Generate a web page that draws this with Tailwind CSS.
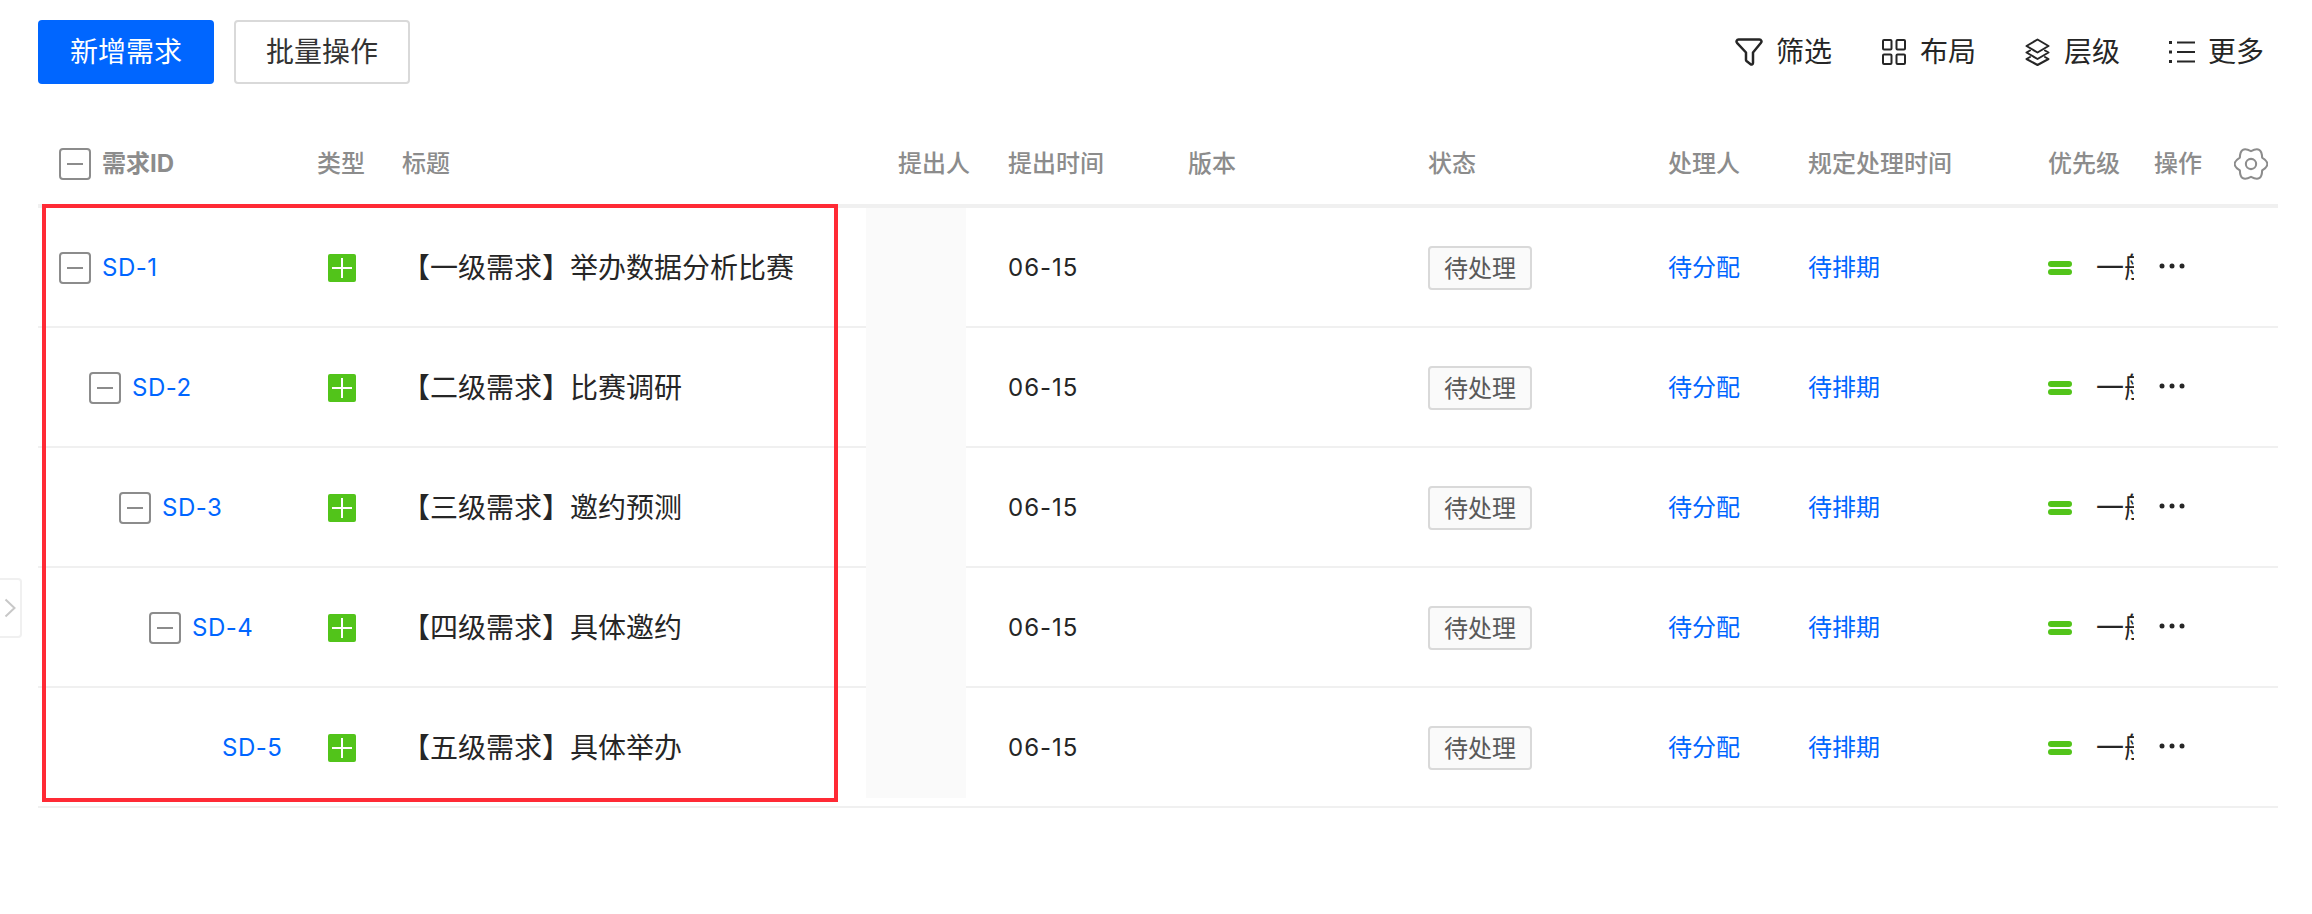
<!DOCTYPE html>
<html lang="zh-CN">
<head>
  <meta charset="UTF-8">
  <title>需求列表</title>
  <script src="https://cdn.jsdelivr.net/npm/@tailwindcss/browser@4"></script>
</head>
<body class="bg-white text-[#262626] font-['Inter','Noto_Sans_CJK_SC',sans-serif] overflow-hidden">

  <div class="relative w-[2312px] h-[914px] pl-[38px] pr-[34px] pt-[20px]">

    <!-- Toolbar -->
    <div class="flex items-center justify-between h-[64px] text-[28px] leading-none">
      <div class="flex gap-[20px]">
        <button class="w-[176px] h-[64px] rounded-[4px] bg-[#0066ff] text-white">新增需求</button>
        <button class="w-[176px] h-[64px] rounded-[4px] border-2 border-[#d9d9d9] text-[#333]">批量操作</button>
      </div>
      <div class="flex items-center gap-[49px] pr-[14px]">
        <div class="flex items-center gap-[13px] mr-[1px]">
          <svg class="w-[28px] h-[28px]" viewBox="0 0 28 28" fill="none" stroke="#262626" stroke-width="2.500" stroke-linejoin="round"><path d="M3.500 1.500H24.500a2 2 0 0 1 1.500 3.300L18 14.500V25a1.500 1.500 0 0 1-2.400 1.200L11.500 23a1.500 1.500 0 0 1-.5-1.100V14.500L2 4.800A2 2 0 0 1 3.500 1.500Z"/></svg>
          <span>筛选</span>
        </div>
        <div class="flex items-center gap-[14px]">
          <svg class="w-[24px] h-[26px]" viewBox="0 0 24 26" fill="none" stroke="#262626" stroke-width="2"><rect x="1" y="1" width="8.500" height="9.500" rx="1"/><rect x="14.500" y="1" width="8.500" height="9.500" rx="1"/><rect x="1" y="15.500" width="8.500" height="9.500" rx="1"/><rect x="14.500" y="15.500" width="8.500" height="9.500" rx="1"/></svg>
          <span>布局</span>
        </div>
        <div class="flex items-center gap-[14px]">
          <svg class="w-[25px] h-[28px]" viewBox="0 0 25 28" fill="none" stroke="#262626" stroke-width="2" stroke-linejoin="round" stroke-linecap="round"><path d="M12.500 1.500L23.500 8 12.500 14.500 1.500 8Z"/><path d="M5 12.500L1.500 14.500 12.500 21 23.500 14.500 20 12.500"/><path d="M5 19L1.500 21 12.500 27 23.500 21 20 19"/></svg>
          <span>层级</span>
        </div>
        <div class="flex items-center gap-[13px]">
          <svg class="w-[26px] h-[24px]" viewBox="0 0 26 24" fill="#262626"><rect x="0" y="1" width="3" height="3"/><rect x="0" y="10.500" width="3" height="3"/><rect x="0" y="20" width="3" height="3"/><rect x="8" y="1.500" width="18" height="2"/><rect x="8" y="11" width="18" height="2"/><rect x="8" y="20.500" width="18" height="2"/></svg>
          <span>更多</span>
        </div>
      </div>
    </div>

    <!-- Table header -->
    <div class="mt-[38px] h-[86px] pt-[2px] border-b-4 border-[#f0f0f0] grid grid-cols-[279px_85px_496px_110px_180px_240px_240px_140px_240px_106px_124px] items-center text-[24px] font-medium text-[#8c8c8c]">
      <div class="flex items-center pl-[21px] gap-[11px]">
        <span class="w-[32px] h-[32px] rounded-[4px] border-2 border-[#8c8c8c] flex items-center justify-center"><span class="w-[16px] h-[2px] bg-[#8c8c8c]"></span></span>
        <span class="font-bold">需求ID</span>
      </div>
      <div>类型</div>
      <div>标题</div>
      <div>提出人</div>
      <div>提出时间</div>
      <div>版本</div>
      <div>状态</div>
      <div>处理人</div>
      <div>规定处理时间</div>
      <div>优先级</div>
      <div class="flex items-center justify-between pr-[10px]">
        <span>操作</span>
        <svg class="w-[34px] h-[32px]" viewBox="0 0 33 30" fill="none" stroke="#8c8c8c" stroke-width="2" stroke-linejoin="round"><path d="M16.500 2.500Q27-3.200 27.300 8.750 37.500 15 27.300 21.250 27 33.200 16.500 27.500 6 33.200 5.700 21.250-4.500 15 5.700 8.750 6-3.200 16.500 2.500Z"/><circle cx="16.500" cy="15" r="5"/></svg>
      </div>
    </div>

    <!-- Table rows -->
    <div id="rows"></div>

    <!-- Collapsed sidebar handle -->
    <div class="absolute left-0 top-[578px] w-[22px] h-[60px] bg-white border-2 border-l-0 border-[#f0f0f0] rounded-r-[4px] flex items-center justify-center">
      <svg class="w-[12px] h-[20px]" viewBox="0 0 12 20" fill="none" stroke="#c8c8c8" stroke-width="2"><path d="M1.500 1.500L10.500 10 1.500 18.500"/></svg>
    </div>

    <!-- Blurred submitter column -->
    <div class="absolute left-[866px] top-[208px] w-[100px] h-[590px] bg-[#fafafa]"></div>

    <!-- Red annotation box -->
    <div class="absolute left-[42px] top-[204px] w-[796px] h-[598px] border-4 border-[#ff2a35]"></div>
  </div>

  <script>
    const rows = [
      { id: "SD-1", title: "【一级需求】举办数据分析比赛", level: 0, open: true },
      { id: "SD-2", title: "【二级需求】比赛调研", level: 1, open: true },
      { id: "SD-3", title: "【三级需求】邀约预测", level: 2, open: true },
      { id: "SD-4", title: "【四级需求】具体邀约", level: 3, open: true },
      { id: "SD-5", title: "【五级需求】具体举办", level: 4, open: false },
    ];

    document.getElementById("rows").innerHTML = rows.map(r => `
      <div class="h-[120px] pt-[2px] border-b-2 border-[#f0f0f0] grid grid-cols-[279px_85px_496px_110px_180px_240px_240px_140px_240px_106px_124px] items-center text-[24px]">
        <div class="flex items-center gap-[11px] text-[#0066ff]" style="padding-left:${21 + r.level * 30}px">
          ${r.open
            ? `<span class="w-[32px] h-[32px] rounded-[4px] border-2 border-[#8c8c8c] flex items-center justify-center"><span class="w-[16px] h-[2px] bg-[#8c8c8c]"></span></span>`
            : `<span class="w-[32px] h-[32px]"></span>`}
          <span class="tracking-[0.5px]">${r.id}</span>
        </div>
        <div class="pl-[11px]">
          <svg class="w-[28px] h-[28px]" viewBox="0 0 28 28"><rect width="28" height="28" rx="2" fill="#52c41a"/><path d="M4 14H24M14 4V24" stroke="#fff" stroke-width="2"/></svg>
        </div>
        <div class="text-[28px] whitespace-nowrap">${r.title}</div>
        <div></div>
        <div class="tracking-[1px]">06-15</div>
        <div></div>
        <div><span class="inline-flex items-center justify-center w-[104px] h-[44px] pt-[2px] rounded-[4px] border-2 border-[#d9d9d9] bg-[#fafafa] text-[#595959]">待处理</span></div>
        <div class="text-[#0066ff]">待分配</div>
        <div class="text-[#0066ff]">待排期</div>
        <div class="flex items-center gap-[24px]">
          <span class="w-[24px] flex flex-col gap-[2px]"><span class="h-[6px] rounded-full bg-[#52c41a]"></span><span class="h-[6px] rounded-full bg-[#52c41a]"></span></span>
          <span class="w-[38px] overflow-hidden whitespace-nowrap text-[28px]">一般</span>
        </div>
        <div class="pl-[5px] -mt-[4px]">
          <svg class="w-[26px] h-[6px]" viewBox="0 0 26 6" fill="#262626"><circle cx="3" cy="3" r="2.500"/><circle cx="13" cy="3" r="2.500"/><circle cx="23" cy="3" r="2.500"/></svg>
        </div>
      </div>`).join("");
  </script>
</body>
</html>
